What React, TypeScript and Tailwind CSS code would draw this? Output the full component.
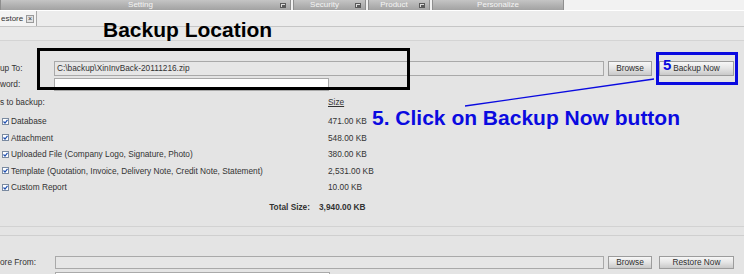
import React from "react";

const ui = { fontFamily: '"Liberation Sans", Arial, sans-serif' };

function TopTab({ label, w, icon }: { label: string; w: string; icon?: boolean }) {
  return (
    <div className={`${w} h-full flex items-center bg-gradient-to-b from-[#c4c4c4] to-[#a2a2a2] border-x border-[#8e8e8e]`}>
      <span className="flex-1 text-center text-[8px] text-[#f4f4f4] leading-none">{label}</span>
      {icon && (
        <span className="mr-[4px] w-[6px] h-[5px] border border-[#5a5a5a] bg-[#dcdcdc] relative">
          <span className="absolute right-0 bottom-0 w-[3px] h-[2px] bg-[#5a5a5a]" />
        </span>
      )}
    </div>
  );
}

function Btn({ label, w }: { label: string; w: string }) {
  return (
    <div className={`${w} h-full flex items-center justify-center bg-gradient-to-b from-[#f7f7f7] via-[#e4e4e4] to-[#c9c9c9] border border-[#9c9c9c] text-[8.3px] text-[#2e2e2e]`}>
      {label}
    </div>
  );
}

function Check() {
  return (
    <span className="w-[7px] h-[7px] ml-[2px] mr-[2px] bg-white border border-[#7a8aa0] flex items-center justify-center">
      <svg width="5" height="5" viewBox="0 0 5 5">
        <path d="M0.5 2.5 L2 4 L4.5 0.8" stroke="#1f4fb0" strokeWidth="1.2" fill="none" />
      </svg>
    </span>
  );
}

const items = [
  ["Database", "471.00 KB"],
  ["Attachment", "548.00 KB"],
  ["Uploaded File (Company Logo, Signature, Photo)", "380.00 KB"],
  ["Template (Quotation, Invoice, Delivery Note, Credit Note, Statement)", "2,531.00 KB"],
  ["Custom Report", "10.00 KB"],
];

export default function App() {
  return (
    <div className="relative w-[744px] h-[274px] overflow-hidden bg-[#e4e4e4] text-[#333]" style={ui}>
      {/* top menu tabs */}
      <div className="h-[11px] flex gap-[2px] bg-[#f2f2f2] border-b border-white">
        <TopTab label="Setting" w="w-[291px]" icon />
        <TopTab label="Security" w="w-[73px]" icon />
        <TopTab label="Product" w="w-[62px]" icon />
        <TopTab label="Personalize" w="w-[132px]" />
      </div>

      {/* document tab strip */}
      <div className="h-[16px] flex items-end bg-[#ececec] border-b border-[#c6c6c6]">
        <div className="h-[15px] w-[37px] flex items-center bg-[#f3f3f3] border-r border-[#a8a8a8]">
          <span className="text-[8px] text-[#333] ml-[1px]">estore</span>
          <span className="ml-auto mr-[2px] w-[8px] h-[8px] border border-[#9a9a9a] bg-[#e2e2e2] flex items-center justify-center text-[7px] leading-none text-[#333]">×</span>
        </div>
      </div>
      <div className="h-[14px] bg-[#e9e9e9] border-b border-[#d4d4d4]" />

      {/* backup section */}
      <div className="pt-[20px] text-[8.3px]">
        <div className="h-[15px] flex items-center">
          <span className="w-[54px]">up To:</span>
          <div className="w-[550px] h-full flex items-center bg-[#e6e6e6] border border-[#a9a9a9] pl-[2px]">C:\backup\XinInvBack-20111216.zip</div>
          <div className="w-[4px]" />
          <Btn label="Browse" w="w-[44px]" />
          <div className="w-[7px]" />
          <Btn label="Backup Now" w="w-[75px]" />
        </div>
        <div className="h-[13px] mt-[2px] flex items-center">
          <span className="w-[54px]">word:</span>
          <div className="w-[275px] h-full bg-white border border-[#a9a9a9]" />
        </div>
        <div className="h-[14px] mt-[4px] flex items-center">
          <span className="w-[328px]">s to backup:</span>
          <span className="underline">Size</span>
        </div>
        <div className="mt-[4px]">
          {items.map(([name, size]) => (
            <div key={name} className="h-[16.5px] flex items-center">
              <div className="w-[326px] flex items-center">
                <Check />
                <span>{name}</span>
              </div>
              <span className="pl-[2px]">{size}</span>
            </div>
          ))}
        </div>
        <div className="h-[14px] mt-[5px] flex items-center font-bold">
          <span className="w-[319px] text-right pr-[9px]">Total Size:</span>
          <span>3,940.00 KB</span>
        </div>
        <div className="h-[12px] border-b border-[#d2d2d2]" />
        <div className="h-[9px] border-b border-[#cfcfcf]" />

        <div className="h-[13px] mt-[20px] flex items-center">
          <span className="w-[55px]">ore From:</span>
          <div className="w-[549px] h-full bg-[#e6e6e6] border border-[#a9a9a9]" />
          <div className="w-[4px]" />
          <Btn label="Browse" w="w-[44px]" />
          <div className="w-[7px]" />
          <Btn label="Restore Now" w="w-[75px]" />
        </div>
        <div className="h-[13px] mt-[3px] flex">
          <span className="w-[55px]" />
          <div className="w-[275px] h-full bg-white border border-[#a9a9a9]" />
        </div>
      </div>

      {/* annotations */}
      <div className="absolute left-[103px] top-[19px] text-[21px] font-bold text-black leading-none">
        Backup Location
      </div>
      <div className="absolute left-[37px] top-[48px] w-[373px] h-[42px] border-[3px] border-black" />
      <div className="absolute left-[656px] top-[52px] w-[82px] h-[33px] border-[3px] border-[#0a0ae0]" />
      <div className="absolute left-[663px] top-[57px] text-[15px] font-bold text-[#0a0ae0] leading-none">5</div>
      <svg className="absolute left-0 top-0" width="744" height="274">
        <line x1="465" y1="106" x2="654" y2="79" stroke="#0a0ae0" strokeWidth="1.3" />
      </svg>
      <div className="absolute left-[372px] top-[107px] text-[21px] font-bold text-[#0a0ae0] leading-none">
        5. Click on Backup Now button
      </div>
    </div>
  );
}
